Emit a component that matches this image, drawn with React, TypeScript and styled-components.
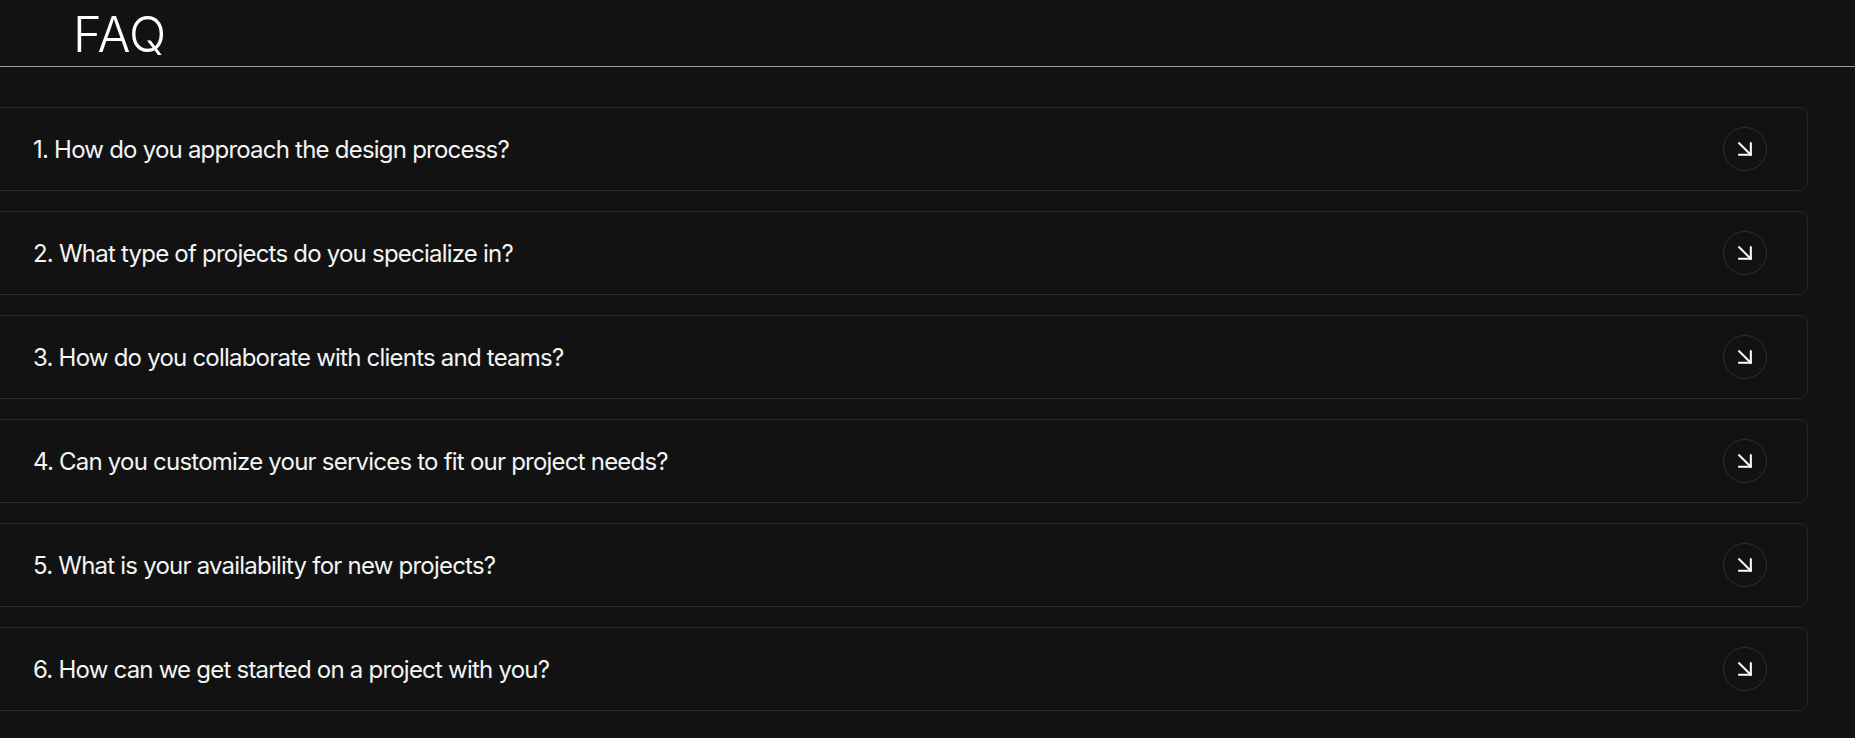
import React from "react";
import styled, { createGlobalStyle } from "styled-components";
import { ArrowDownRight } from "lucide-react";

const Global = createGlobalStyle`
  html, body { margin: 0; padding: 0; background: #121212; }
  body { font-family: Inter, "Noto Sans", sans-serif; color: #f2f2f2; overflow: hidden; }
  * { box-sizing: border-box; }
`;

const Page = styled.div`
  width: 1855px;
  height: 738px;
  background: #121212;
  overflow: hidden;
`;

const Header = styled.header`
  height: 67px;
  border-bottom: 1px solid #9a9a9a;
  padding-left: 73px;
  display: flex;
  align-items: flex-end;
`;

const Title = styled.h1`
  margin: 0;
  font-family: Inter, sans-serif;
  font-weight: 300;
  font-size: 49px;
  line-height: 1;
  letter-spacing: 0;
  color: #ffffff;
  padding-bottom: 7px;
`;

const List = styled.ul`
  list-style: none;
  margin: 40px 47px 0 -12px;
  padding: 0;
  display: flex;
  flex-direction: column;
  gap: 20px;
`;

const Card = styled.li`
  height: 84px;
  border: 1px solid #2a2a2a;
  border-radius: 9px;
  display: flex;
  align-items: center;
  justify-content: space-between;
  padding: 0 40px 0 44px;
`;

const Question = styled.span`
  font-family: Inter, sans-serif;
  font-size: 24px;
  font-weight: 400;
  letter-spacing: -0.78px;
  color: #f4f4f4;
`;

const IconButton = styled.span`
  width: 44px;
  height: 44px;
  border-radius: 50%;
  border: 1px solid #2e2e2e;
  display: flex;
  align-items: center;
  justify-content: center;
  color: #ffffff;
`;

const questions = [
  "1. How do you approach the design process?",
  "2. What type of projects do you specialize in?",
  "3. How do you collaborate with clients and teams?",
  "4. Can you customize your services to fit our project needs?",
  "5. What is your availability for new projects?",
  "6. How can we get started on a project with you?",
];

export default function App() {
  return (
    <Page>
      <Global />
      <Header>
        <Title>FAQ</Title>
      </Header>
      <List>
        {questions.map((q) => (
          <Card key={q}>
            <Question>{q}</Question>
            <IconButton>
              <ArrowDownRight size={28} strokeWidth={2} absoluteStrokeWidth strokeLinecap="square" />
            </IconButton>
          </Card>
        ))}
      </List>
    </Page>
  );
}
